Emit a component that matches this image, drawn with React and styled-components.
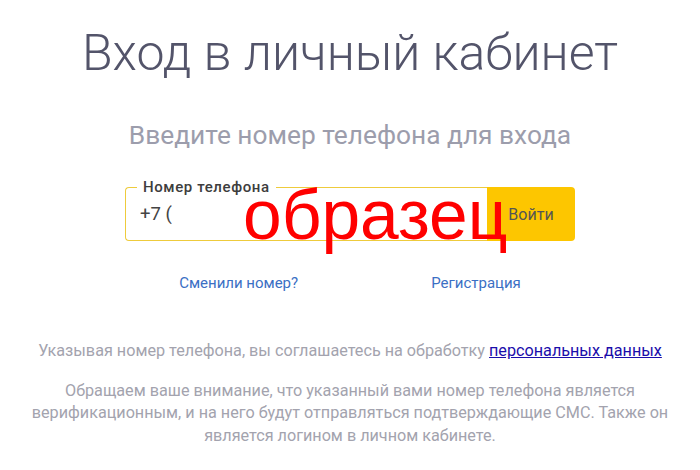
import React from "react";
import styled, { createGlobalStyle } from "styled-components";

const GlobalStyle = createGlobalStyle`
  body {
    margin: 0;
    background: #ffffff;
    font-family: Roboto, "Noto Sans", sans-serif;
  }
`;

const Page = styled.div`
  display: flex;
  flex-direction: column;
  align-items: center;
  padding-top: 28px;
  text-align: center;
`;

const Title = styled.h1`
  margin: 0;
  font-size: 50px;
  font-weight: 300;
  line-height: 1;
  color: #53546a;
`;

const Subtitle = styled.h2`
  margin: 44px 0 0;
  font-size: 26.3px;
  font-weight: 400;
  line-height: 1;
  color: #9c9dac;
`;

const FormRow = styled.form`
  position: relative;
  display: flex;
  width: 450px;
  height: 54px;
  margin-top: 39px;
`;

const Field = styled.label`
  position: relative;
  flex: 1;
  display: flex;
  align-items: center;
  border: 1px solid #eecb3c;
  border-right: none;
  border-radius: 4px 0 0 4px;
  padding-left: 14px;
`;

const FieldLabel = styled.span`
  position: absolute;
  top: -10px;
  left: 11px;
  padding: 0 6px;
  background: #ffffff;
  font-size: 15px;
  font-weight: 500;
  letter-spacing: 0.6px;
  line-height: 18px;
  color: #3d3d3d;
`;

const PhoneInput = styled.input`
  border: none;
  outline: none;
  padding: 0;
  width: 100%;
  background: transparent;
  font-family: Roboto, sans-serif;
  font-size: 18.5px;
  color: #444444;
`;

const SubmitButton = styled.button`
  width: 88px;
  border: none;
  border-radius: 0 4px 4px 0;
  background: #fdc600;
  font-family: Roboto, sans-serif;
  font-size: 16px;
  color: #555555;
  cursor: pointer;
`;

const Watermark = styled.span`
  position: absolute;
  left: 118px;
  top: -6px;
  font-family: "Liberation Sans", Arial, sans-serif;
  font-size: 69.5px;
  line-height: 1;
  color: #ff0000;
  pointer-events: none;
`;

const Links = styled.div`
  display: flex;
  justify-content: center;
  gap: 133px;
  margin-top: 35px;
`;

const NavLink = styled.a`
  font-size: 15px;
  line-height: 1;
  color: #3b6fc4;
  text-decoration: none;
`;

const Note = styled.p`
  margin: ${p => p.gap}px 0 0;
  font-size: 16.2px;
  line-height: ${p => p.lh};
  color: #a3a3ae;
`;

const DataLink = styled.a`
  color: #1a0dab;
  text-decoration: underline;
`;

export default function App() {
  return (
    <>
      <GlobalStyle />
      <Page>
        <Title>Вход в личный кабинет</Title>
        <Subtitle>Введите номер телефона для входа</Subtitle>
        <FormRow onSubmit={e => e.preventDefault()}>
          <Field>
            <FieldLabel>Номер телефона</FieldLabel>
            <PhoneInput defaultValue="+7 (" />
          </Field>
          <SubmitButton type="submit">Войти</SubmitButton>
          <Watermark>образец</Watermark>
        </FormRow>
        <Links>
          <NavLink href="#">Сменили номер?</NavLink>
          <NavLink href="#">Регистрация</NavLink>
        </Links>
        <Note gap={52} lh="1">
          Указывая номер телефона, вы соглашаетесь на обработку{" "}
          <DataLink href="#">персональных данных</DataLink>
        </Note>
        <Note gap={20} lh="22.5px">
          Обращаем ваше внимание, что указанный вами номер телефона является
          <br />
          верификационным, и на него будут отправляться подтверждающие СМС. Также он
          <br />
          является логином в личном кабинете.
        </Note>
      </Page>
    </>
  );
}
